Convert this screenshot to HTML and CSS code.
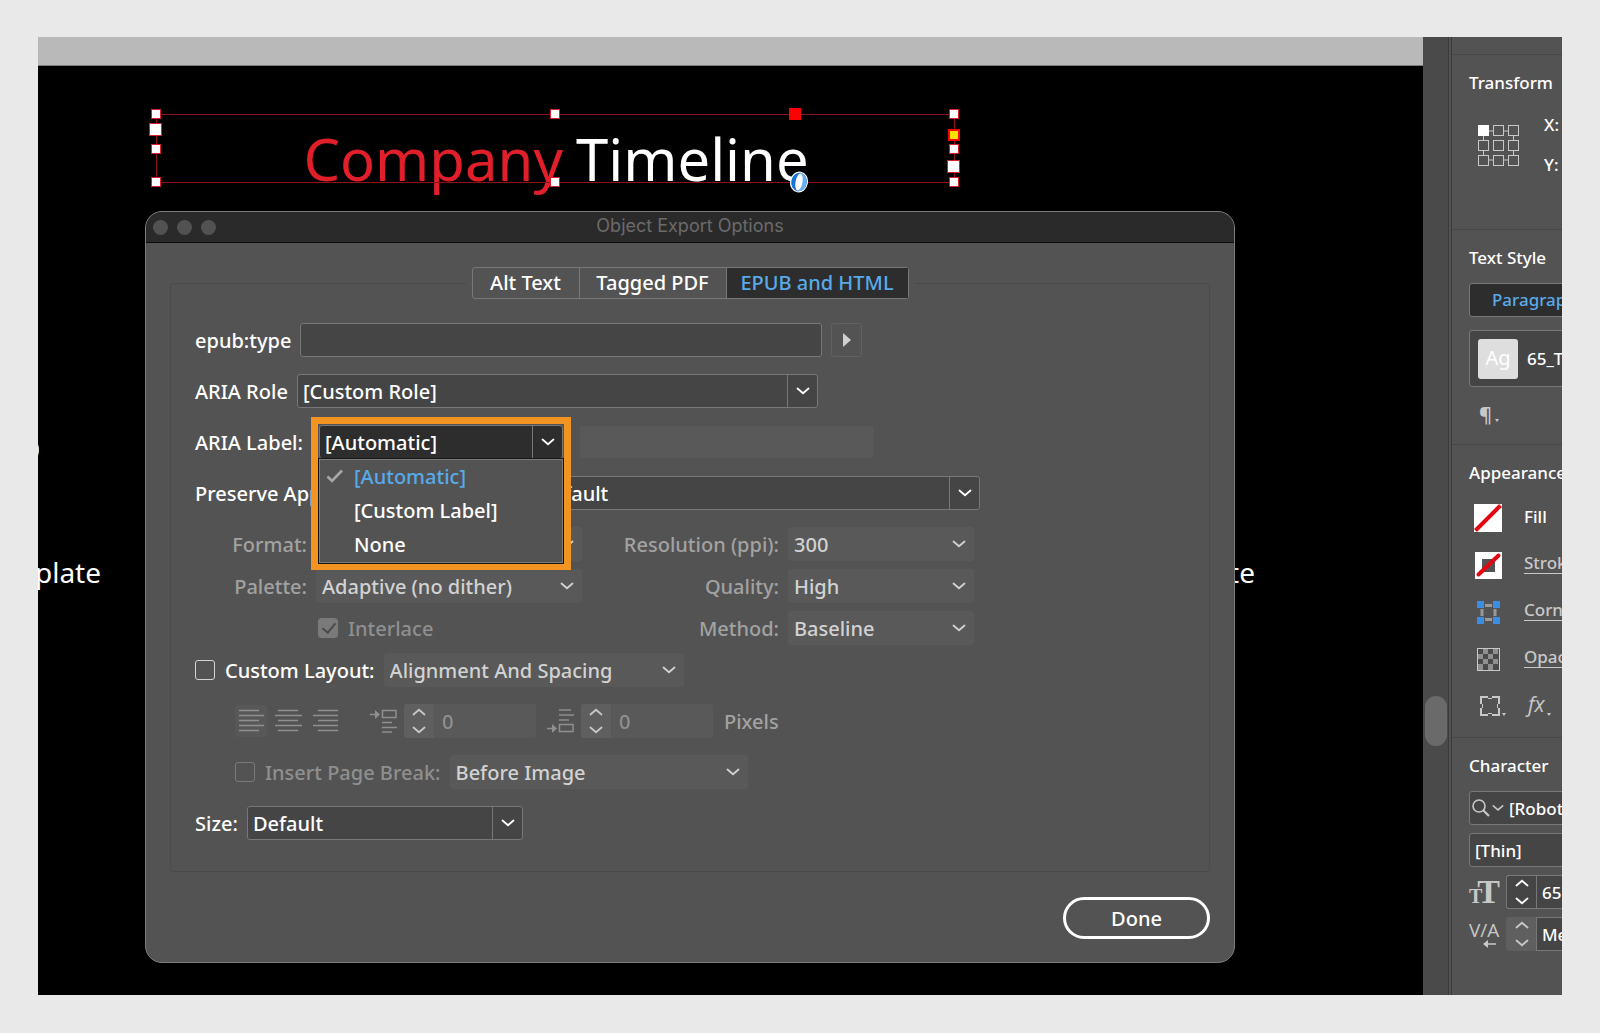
FILE: index.html
```html
<!DOCTYPE html>
<html lang="en">
<head>
    <meta charset="UTF-8">
    <meta name="viewport" content="width=device-width, initial-scale=1.0">
    <title>Object Export Options</title>
    <link rel="stylesheet" href="styles.css">
</head>
<body>
    <!-- shared icons -->
    <svg class="defs" width="0" height="0">
        <symbol id="chevron" viewBox="0 0 14 8"><path d="M1.5 1.5 L7 6.2 L12.5 1.5" fill="none" stroke="currentColor" stroke-width="1.8" stroke-linecap="round"/></symbol>
        <symbol id="updown" viewBox="0 0 14 26"><path d="M1.5 6.5 L7 1.8 L12.5 6.5 M1.5 19.5 L7 24.2 L12.5 19.5" fill="none" stroke="currentColor" stroke-width="1.8" stroke-linecap="round"/></symbol>
    </svg>

    <div class="screen">
        <main class="canvas">
            <div class="pasteboard"></div>

            <!-- artwork on the page -->
            <div class="pill"></div>
            <span class="caption caption-left">Template</span>
            <span class="caption caption-right">Template</span>
            <div class="text-frame">
                <h1><span class="red">Company</span><span>Timeline</span></h1>
                <svg class="handles" viewBox="0 0 816 90">
                    <rect x="8.500" y="11.500" width="798" height="68" fill="none" stroke="#8d1218" stroke-width="1"/>
                    <g fill="#fff" stroke="#d8202c">
                        <rect x="3.500" y="6.500" width="9" height="9"/>
                        <rect x="1.500" y="20.500" width="12" height="12"/>
                        <rect x="3.500" y="41.500" width="9" height="9"/>
                        <rect x="3.500" y="74.500" width="9" height="9"/>
                        <rect x="402.500" y="6.500" width="9" height="9"/>
                        <rect x="402.500" y="74.500" width="9" height="9"/>
                        <rect x="801.500" y="6.500" width="9" height="9"/>
                        <rect x="801.500" y="41.500" width="9" height="9"/>
                        <rect x="799.500" y="57.500" width="12" height="12"/>
                        <rect x="801.500" y="74.500" width="9" height="9"/>
                    </g>
                    <rect x="641" y="5" width="12" height="12" fill="#f00"/>
                    <rect x="801" y="27" width="10" height="10" fill="#ffe000" stroke="#f00" stroke-width="2"/>
                    <g transform="rotate(10 651 79)">
                        <ellipse cx="651" cy="79" rx="9" ry="10.500" fill="#fff"/>
                        <ellipse cx="651" cy="79" rx="7.800" ry="9.300" fill="#1473d8"/>
                        <path d="M651 69.700 A7.800 9.300 0 0 1 651 88.300 Z" fill="#69aef0"/>
                        <ellipse cx="651" cy="79" rx="3.500" ry="8.500" fill="#fff"/>
                    </g>
                </svg>
            </div>

            <!-- dialog -->
            <section class="dialog">
                <header class="titlebar">
                    <span class="light"></span><span class="light"></span><span class="light"></span>
                    <h2>Object Export Options</h2>
                </header>
                <form class="dialog-body">
                    <fieldset>
                        <legend>
                            <span class="tabs">
                                <button type="button">Alt Text</button>
                                <button type="button">Tagged PDF</button>
                                <button type="button" class="active">EPUB and HTML</button>
                            </span>
                        </legend>

                        <div class="row">
                            <label for="epubType">epub:type</label>
                            <input type="text" id="epubType" class="epub-input">
                            <button type="button" class="flyout" aria-label="Choose type">
                                <svg width="8" height="14"><path d="M0 0 L8 7 L0 14 Z" fill="#d0d0d0"/></svg>
                            </button>
                        </div>

                        <div class="row">
                            <label for="ariaRole">ARIA Role</label>
                            <span class="select role-select">
                                <select id="ariaRole"><option>[Custom Role]</option></select>
                                <svg><use href="#chevron"/></svg>
                            </span>
                        </div>

                        <div class="row">
                            <label for="ariaLabel" class="aria-label">ARIA Label:</label>
                            <div class="combo">
                                <span class="select pressed">
                                    <select id="ariaLabel"><option>[Automatic]</option><option>[Custom Label]</option><option>None</option></select>
                                    <svg><use href="#chevron"/></svg>
                                </span>
                                <ul class="menu">
                                    <li class="selected">
                                        <svg width="18" height="14" viewBox="0 0 18 14"><path d="M1.500 7.500 L6 12 L16 1.500" fill="none" stroke="#a8a8a8" stroke-width="2.600"/></svg>
                                        [Automatic]
                                    </li>
                                    <li>[Custom Label]</li>
                                    <li>None</li>
                                </ul>
                            </div>
                            <input type="text" class="label-input" aria-label="Custom label" disabled>
                        </div>

                        <div class="row">
                            <label for="preserve" class="preserve-label">Preserve Appearance From Layout:</label>
                            <span class="select preserve-select">
                                <select id="preserve"><option>Default</option></select>
                                <svg><use href="#chevron"/></svg>
                            </span>
                        </div>

                        <div class="image-grid">
                            <label for="format">Format:</label>
                            <span class="select flat">
                                <select id="format" disabled><option>PNG</option></select>
                                <svg><use href="#chevron"/></svg>
                            </span>
                            <label for="resolution">Resolution (ppi):</label>
                            <span class="select flat">
                                <select id="resolution" disabled><option>300</option></select>
                                <svg><use href="#chevron"/></svg>
                            </span>

                            <label for="palette">Palette:</label>
                            <span class="select flat">
                                <select id="palette" disabled><option>Adaptive (no dither)</option></select>
                                <svg><use href="#chevron"/></svg>
                            </span>
                            <label for="quality">Quality:</label>
                            <span class="select flat">
                                <select id="quality" disabled><option>High</option></select>
                                <svg><use href="#chevron"/></svg>
                            </span>

                            <span class="check interlace">
                                <input type="checkbox" id="interlace" checked disabled>
                                <label for="interlace">Interlace</label>
                            </span>
                            <label for="method">Method:</label>
                            <span class="select flat">
                                <select id="method" disabled><option>Baseline</option></select>
                                <svg><use href="#chevron"/></svg>
                            </span>
                        </div>

                        <div class="row">
                            <span class="check">
                                <input type="checkbox" id="customLayout">
                                <label for="customLayout">Custom Layout:</label>
                            </span>
                            <span class="select flat layout-select">
                                <select aria-label="Layout" disabled><option>Alignment And Spacing</option></select>
                                <svg><use href="#chevron"/></svg>
                            </span>
                        </div>

                        <div class="row indent spacing-row">
                            <div class="align">
                                <button type="button" class="on" aria-label="Align left" disabled>
                                    <svg width="25" height="24"><path d="M0 1.500H20M0 6.500H25M0 11.500H20M0 16.500H25M0 21.500H20"/></svg>
                                </button>
                                <button type="button" aria-label="Align center" disabled>
                                    <svg width="27" height="24"><path d="M3 1.500H23M0 6.500H27M3 11.500H23M0 16.500H27M3 21.500H23"/></svg>
                                </button>
                                <button type="button" aria-label="Align right" disabled>
                                    <svg width="25" height="24"><path d="M5 1.500H25M0 6.500H25M5 11.500H25M0 16.500H25M5 21.500H25"/></svg>
                                </button>
                            </div>
                            <svg class="space-icon" width="27" height="24"><path d="M0 5.500H8M12.500 1.500H26V8.500H12.500ZM12 13.500H22M12 18.500H27M12 23H22"/><path class="tip" d="M5 1L10 5.500L5 10Z"/></svg>
                            <span class="stepper">
                                <svg width="14" height="26"><use href="#updown"/></svg>
                                <input type="text" value="0" aria-label="Space before" disabled>
                            </span>
                            <svg class="space-icon" width="27" height="24"><path d="M12 1H24M12 6H27M12 11H22M0 19.500H8M12.500 15.500H26V22.500H12.500Z"/><path class="tip" d="M5 15L10 19.500L5 24Z"/></svg>
                            <span class="stepper">
                                <svg width="14" height="26"><use href="#updown"/></svg>
                                <input type="text" value="0" aria-label="Space after" disabled>
                            </span>
                            <span class="unit">Pixels</span>
                        </div>

                        <div class="row indent">
                            <span class="check dim">
                                <input type="checkbox" id="pageBreak" disabled>
                                <label for="pageBreak">Insert Page Break:</label>
                            </span>
                            <span class="select flat break-select">
                                <select aria-label="Page break position" disabled><option>Before Image</option></select>
                                <svg><use href="#chevron"/></svg>
                            </span>
                        </div>

                        <div class="row">
                            <label for="size">Size:</label>
                            <span class="select size-select">
                                <select id="size"><option>Default</option></select>
                                <svg><use href="#chevron"/></svg>
                            </span>
                        </div>
                    </fieldset>
                    <button type="button" class="done">Done</button>
                </form>
            </section>
        </main>

        <div class="scrollbar"><div class="thumb"></div></div>

        <aside class="panel">
            <section class="transform">
                <h3>Transform</h3>
                <div class="transform-row">
                    <svg width="41" height="41" fill="none" stroke="#c8c8c8">
                        <path d="M11 6H15M26 6H30M11 35H15M26 35H30M5.500 11V15M5.500 26V30M35.500 11V15M35.500 26V30"/>
                        <rect x="0.500" y="0.500" width="10" height="10" fill="#fff" stroke="#fff"/>
                        <rect x="15.500" y="0.500" width="10" height="10"/>
                        <rect x="30.500" y="0.500" width="10" height="10"/>
                        <rect x="0.500" y="15.500" width="10" height="10"/>
                        <rect x="15.500" y="15.500" width="10" height="10"/>
                        <rect x="30.500" y="15.500" width="10" height="10"/>
                        <rect x="0.500" y="30.500" width="10" height="10"/>
                        <rect x="15.500" y="30.500" width="10" height="10"/>
                        <rect x="30.500" y="30.500" width="10" height="10"/>
                    </svg>
                    <div class="xy"><span>X:</span><span>Y:</span></div>
                </div>
            </section>

            <section class="text-style">
                <h3>Text Style</h3>
                <button type="button" class="style-tab">Paragraph Styles</button>
                <button type="button" class="style-item"><span class="swatch">Ag</span>65_Title</button>
                <div class="pilcrow">¶<i class="tick"></i></div>
            </section>

            <section class="appearance">
                <h3>Appearance</h3>
                <div class="prop">
                    <svg width="28" height="28"><rect width="28" height="28" fill="#fff"/><path d="M1.500 26.500 L26.500 1.500" stroke="#e30613" stroke-width="4"/></svg>
                    <span>Fill</span>
                </div>
                <div class="prop">
                    <svg width="28" height="28"><path d="M1 1H28V28H1ZM8 8V21H21V8Z" fill="#fff" fill-rule="evenodd"/><path d="M4.500 23.500 L24.500 4.500" stroke="#e30613" stroke-width="4" stroke-linecap="round"/></svg>
                    <a href="#">Stroke</a>
                </div>
                <div class="prop">
                    <svg width="28" height="28"><path d="M11 7.500H18M11 21.500H18M8 11V18M21 11V18" stroke="#999" stroke-width="3"/><path d="M3 3h7v7h-7zM19 3h7v7h-7zM3 19h7v7h-7zM19 19h7v7h-7z" fill="#3a8ee6"/></svg>
                    <a href="#">Corner</a>
                </div>
                <div class="prop">
                    <svg width="28" height="28"><rect x="3.500" y="3.500" width="22" height="22" fill="#4a4a4a" stroke="#c8c8c8"/><path d="M9 4h5v5h-5zM19 4h5v5h-5zM4 9h5v5h-5zM14 9h5v5h-5zM9 14h5v5h-5zM19 14h5v5h-5zM4 19h5v6h-5zM14 19h5v6h-5z" fill="#8f8f8f"/></svg>
                    <a href="#">Opacity</a>
                </div>
                <div class="effects">
                    <svg width="20" height="20" fill="none" stroke="#c8c8c8"><path stroke-width="2" d="M8 1H1V8M12 1H19V8M8 19H1V12M12 19H19V12"/><path d="M8 2.500H12M8 17.500H12M2.500 8V12M17.500 8V12"/></svg>
                    <i class="tick"></i>
                    <em>fx</em>
                    <i class="tick"></i>
                </div>
            </section>

            <section class="character">
                <h3>Character</h3>
                <div class="char-field">
                    <svg width="18" height="18" fill="none" stroke="#c8c8c8"><circle cx="7" cy="7" r="6" stroke-width="1.600"/><path d="M11.500 11.500L17 17" stroke-width="2.200"/></svg>
                    <svg class="small-chevron" width="12" height="8"><use href="#chevron"/></svg>
                    <input type="text" value="[Roboto]" aria-label="Font family">
                </div>
                <div class="char-field">
                    <input type="text" value="[Thin]" aria-label="Font style">
                </div>
                <div class="char-row">
                    <span class="size-icon"><small>T</small>T</span>
                    <span class="char-stepper"><svg width="14" height="26"><use href="#updown"/></svg></span>
                    <input type="text" value="65 pt" aria-label="Font size">
                </div>
                <div class="char-row">
                    <span class="kern-icon">V/A
                        <svg width="13" height="8"><path d="M4 4H13" stroke="#c8c8c8" stroke-width="1.500"/><path d="M0 4L5 0V8Z" fill="#c8c8c8"/></svg>
                    </span>
                    <span class="char-stepper off"><svg width="14" height="26"><use href="#updown"/></svg></span>
                    <input type="text" value="Metrics" aria-label="Kerning">
                </div>
            </section>
        </aside>
    </div>
</body>
</html>
```
FILE: styles.css
```css
* {
    box-sizing: border-box;
}
body {
    margin: 0;
    min-height: 100vh;
    padding: 37px 38px 38px;
    display: flex;
    background-color: #e9e9e9;
    font-family: "Noto Sans", "Open Sans", sans-serif;
    font-size: 20px;
    font-weight: 500;
    color: #fff;
}
h1, h2, h3, ul {
    margin: 0;
    padding: 0;
    font-weight: inherit;
}
button, input, select {
    font: inherit;
    color: inherit;
    margin: 0;
}
.defs {
    position: absolute;
}
.screen {
    flex: 1;
    min-width: 0;
    display: flex;
    overflow: hidden;
}

/* canvas */
.canvas {
    position: relative;
    flex: 1;
    min-width: 0;
    min-height: 958px;
    overflow: hidden;
    background-color: #000;
}
.pasteboard {
    height: 29px;
    background-color: #b9b9b9;
    border-bottom: 1px solid #7d7d7d;
}
.pill {
    position: absolute;
    left: -19px;
    top: 402px;
    width: 20px;
    height: 22px;
    border-radius: 10px;
    background-color: #e4e2c8;
}
.caption {
    position: absolute;
    top: 515px;
    font-size: 28px;
    font-weight: 400;
    line-height: 40px;
}
.caption-left {
    right: calc(100% - 63px);
}
.caption-right {
    right: calc(100% - 1217px);
}
.text-frame {
    position: absolute;
    left: 110px;
    top: 66px;
    width: 816px;
    height: 90px;
}
.text-frame h1 {
    display: flex;
    justify-content: center;
    gap: 13px;
    font-size: 58px;
    font-weight: 400;
    line-height: 112px;
}
.red {
    color: #e01f2b;
}
.handles {
    position: absolute;
    left: 0;
    top: 0;
    width: 816px;
    height: 90px;
}

/* dialog window */
.dialog {
    position: absolute;
    left: 107px;
    top: 174px;
    width: 1090px;
    background-color: #535353;
    border: 1px solid #7c7c7c;
    border-radius: 17px;
    overflow: hidden;
}
.titlebar {
    display: flex;
    align-items: center;
    gap: 9px;
    height: 31px;
    padding: 0 7px;
    background-color: #2a2a2a;
    border-bottom: 1px solid #0c0c0c;
}
.titlebar h2 {
    flex: 1;
    padding: 0 72px 3px 0;
    text-align: center;
    font-family: Inter, sans-serif;
    font-size: 18px;
    font-weight: 400;
    color: #6b6b6b;
}
.light {
    width: 15px;
    height: 15px;
    border-radius: 50%;
    background-color: #525252;
}
.dialog-body {
    display: flex;
    flex-direction: column;
    padding: 24px 24px 23px;
}
fieldset {
    margin: 0;
    padding: 24px 24px 31px;
    border: 1px solid #4a4a4a;
    border-radius: 3px;
    min-width: 0;
}
legend {
    margin: 0 auto;
    padding: 0 6px;
}
.tabs {
    display: grid;
    grid-template-columns: 107px 147px 181px;
    border: 1px solid #787878;
    border-radius: 3px;
}
.tabs button {
    height: 30px;
    padding: 0;
    background: none;
    border: 0;
    border-right: 1px solid #787878;
    line-height: 30px;
}
.tabs button:last-child {
    border-right: 0;
}
.tabs .active {
    background-color: #2d2d2d;
    color: #58aaea;
}
.row {
    display: flex;
    align-items: center;
    gap: 9px;
    height: 34px;
    margin-bottom: 17px;
}
.row:last-child {
    margin-bottom: 0;
}
.row label {
    white-space: nowrap;
}
.indent {
    padding-left: 40px;
}
.epub-input {
    width: 522px;
    height: 34px;
    background-color: #454545;
    border: 1px solid #787878;
    border-radius: 3px;
}
.flyout {
    display: flex;
    align-items: center;
    justify-content: center;
    width: 31px;
    height: 34px;
    padding: 0;
    background: none;
    border: 1px solid #616161;
    border-radius: 3px;
}

/* drop-downs */
.select {
    position: relative;
    display: block;
    height: 34px;
}
.select select {
    appearance: none;
    width: 100%;
    height: 100%;
    padding: 0 34px 0 5px;
    background: linear-gradient(#787878, #787878) right 29px top 0 / 1px 100% no-repeat #454545;
    border: 1px solid #787878;
    border-radius: 3px;
    opacity: 1;
}
.select svg {
    position: absolute;
    right: 8px;
    top: 13px;
    width: 14px;
    height: 8px;
    pointer-events: none;
}
.flat {
    color: #d2d2d2;
}
.flat select {
    background: #595959;
    border-color: #595959;
}
.role-select {
    width: 521px;
}
.preserve-label {
    width: 328px;
}
.preserve-select {
    width: 448px;
}
.layout-select {
    width: 300px;
}
.break-select {
    width: 298px;
}
.size-select {
    width: 276px;
}
.label-input {
    width: 294px;
    height: 32px;
    background-color: #595959;
    border: 0;
    border-radius: 3px;
}

/* open drop-down with highlight */
.aria-label {
    width: 107px;
}
.combo {
    position: relative;
    z-index: 1;
    width: 260px;
}
.combo::before {
    content: "";
    position: absolute;
    inset: -8px 0 -111px;
    background-color: #535353;
    border: 7px solid #f29422;
}
.combo .select {
    height: 34px;
    margin: 0 8px;
}
.pressed select {
    background-color: #2d2d2d;
}
.menu {
    position: absolute;
    left: 8px;
    top: 34px;
    width: 244px;
    list-style: none;
    background-color: #535353;
    border: 1px solid #7c7c7c;
    box-shadow: 0 0 0 1px #161616;
}
.menu li {
    position: relative;
    padding-left: 34px;
    line-height: 34px;
}
.menu svg {
    position: absolute;
    left: 6px;
    top: 9px;
}
.menu .selected {
    color: #58aaea;
}

/* image settings */
.image-grid {
    display: grid;
    grid-template-columns: 112px 266px 188px 186px;
    gap: 8px 9px;
    align-items: center;
    margin-bottom: 8px;
    color: #a2a2a2;
}
.image-grid > label {
    text-align: right;
}
.check {
    display: flex;
    align-items: center;
    gap: 10px;
}
.interlace {
    grid-column: 2;
    padding-left: 2px;
    color: #8f8f8f;
}
.check input {
    appearance: none;
    display: block;
    width: 20px;
    height: 20px;
    border: 1px solid #d4d4d4;
    border-radius: 3px;
}
.check input:disabled {
    border-color: #7a7a7a;
}
.check input:checked {
    background-color: #7a7a7a;
}
.check input:checked::after {
    content: "";
    display: block;
    width: 6px;
    height: 11px;
    margin: 1px 6px;
    border: solid #4a4a4a;
    border-width: 0 2px 2px 0;
    transform: rotate(40deg);
}
.dim {
    color: #8f8f8f;
}

/* alignment and spacing */
.spacing-row {
    gap: 7px;
    color: #8f8f8f;
}
.align {
    display: flex;
    gap: 5px;
    margin-right: 22px;
}
.align button {
    display: flex;
    align-items: center;
    justify-content: center;
    width: 32px;
    height: 32px;
    padding: 0;
    background: none;
    border: 0;
    border-radius: 3px;
}
.align .on {
    background-color: #585858;
}
.align path, .space-icon path {
    fill: none;
    stroke: #8f8f8f;
    stroke-width: 1.500px;
}
.space-icon .tip {
    fill: #8f8f8f;
    stroke: none;
}
.stepper {
    display: flex;
    align-items: center;
    width: 132px;
    height: 34px;
    padding-left: 8px;
    background: linear-gradient(90deg, #5f5f5f 30px, #595959 30px);
    border-radius: 3px;
    margin-right: 4px;
}
.stepper svg {
    color: #c8c8c8;
}
.stepper input {
    width: 80px;
    margin-left: 16px;
    padding: 0;
    background: none;
    border: 0;
}
.unit {
    color: #a2a2a2;
}
.done {
    align-self: flex-end;
    width: 147px;
    height: 42px;
    margin-top: 25px;
    background: none;
    border: 3px solid #fff;
    border-radius: 21px;
}

/* scrollbar */
.scrollbar {
    width: 29px;
    padding: 659px 4px 0 2px;
    background-color: #4a4a4a;
    border-right: 1px solid #3a3a3a;
    box-shadow: inset -2px 0 #535353, inset -3px 0 #3a3a3a;
}
.thumb {
    height: 50px;
    border-radius: 12px;
    background-color: #6a6a6a;
}

/* properties panel */
.panel {
    width: 110px;
    padding-top: 17px;
    overflow: hidden;
    background-color: #535353;
    font-size: 17px;
    white-space: nowrap;
}
.panel section {
    width: 300px;
    padding: 16px 17px 0;
    border-top: 1px solid #474747;
}
.panel h3 {
    font-size: 17px;
    line-height: 24px;
}
.transform {
    height: 175px;
}
.transform-row {
    display: flex;
    gap: 25px;
    padding: 30px 9px 0;
}
.xy {
    display: flex;
    flex-direction: column;
    gap: 16px;
    margin-top: -12px;
    line-height: 24px;
}
.text-style {
    height: 215px;
}
.style-tab {
    display: block;
    width: 240px;
    height: 34px;
    margin-top: 13px;
    padding: 0 22px;
    text-align: left;
    line-height: 30px;
    background-color: #2d2d2d;
    border: 1px solid #787878;
    border-radius: 3px;
    color: #58aaea;
}
.style-item {
    display: flex;
    align-items: center;
    gap: 9px;
    width: 240px;
    height: 57px;
    margin-top: 13px;
    padding: 0 8px;
    background-color: #454545;
    border: 1px solid #787878;
    border-radius: 3px;
}
.swatch {
    width: 40px;
    height: 40px;
    border-radius: 3px;
    background-color: #dedede;
    font-size: 20px;
    font-weight: 400;
    line-height: 38px;
    text-align: center;
}
.tick {
    display: inline-block;
    border: solid transparent;
    border-width: 3px 2px 0;
    border-top-color: #c8c8c8;
}
.pilcrow {
    padding: 14px 10px 0;
    font-size: 20px;
    font-weight: 600;
    line-height: 28px;
    color: #c8c8c8;
}
.pilcrow .tick {
    margin-left: 3px;
}
.appearance {
    height: 293px;
}
.prop {
    display: flex;
    align-items: center;
    gap: 22px;
    height: 28px;
    margin-bottom: 19px;
    padding-left: 5px;
}
.appearance h3 {
    margin-bottom: 19px;
}
.prop span, .prop a {
    margin-top: -3px;
    line-height: 20px;
}
.prop a {
    color: #c8c8c8;
    text-decoration: none;
    border-bottom: 1px solid #c8c8c8;
}
.effects {
    display: flex;
    align-items: flex-end;
    gap: 2px;
    height: 24px;
    padding-left: 11px;
    color: #c8c8c8;
}
.effects em {
    margin-left: 20px;
    font-family: "Open Sans", sans-serif;
    font-size: 21px;
    font-weight: 400;
    line-height: 24px;
}
.char-field {
    display: flex;
    align-items: center;
    gap: 2px;
    width: 240px;
    height: 34px;
    margin-bottom: 8px;
    padding-left: 2px;
    background-color: #454545;
    border: 1px solid #787878;
    border-radius: 3px;
}
.character h3 {
    margin-bottom: 13px;
}
.char-field input {
    width: 160px;
    padding: 0 0 0 3px;
    background: none;
    border: 0;
}
.small-chevron {
    color: #c8c8c8;
}
.char-row {
    display: flex;
    height: 34px;
    margin-bottom: 8px;
}
.char-row input {
    width: 120px;
    padding: 0 5px;
    background-color: #454545;
    border: 1px solid #787878;
}
.char-stepper {
    display: flex;
    align-items: center;
    justify-content: center;
    width: 30px;
    border: 1px solid #787878;
    border-right: 0;
    border-radius: 3px 0 0 3px;
    background-color: #454545;
}
.char-stepper.off {
    border-color: #5f5f5f;
    background-color: #5f5f5f;
    color: #c8c8c8;
}
.size-icon, .kern-icon {
    position: relative;
    width: 37px;
    color: #c8c8c8;
}
.size-icon {
    font-family: "Liberation Serif", serif;
    font-size: 34px;
    font-weight: 700;
    line-height: 34px;
}
.size-icon small {
    margin-right: -5px;
    font-size: 20px;
}
.kern-icon {
    font-family: "Open Sans", sans-serif;
    font-size: 19px;
    font-weight: 400;
    line-height: 26px;
}
.kern-icon svg {
    position: absolute;
    left: 14px;
    top: 23px;
}
```
